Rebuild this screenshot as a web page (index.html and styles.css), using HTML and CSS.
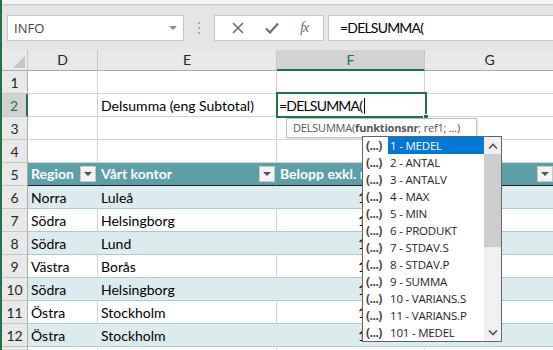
FILE: index.html
```html
<!DOCTYPE html>
<html>
<head>
    <meta charset="utf-8">
    <link rel="stylesheet" href="styles.css">
</head>
<body>
    <div class="edge"></div>
    <div class="app">
        <div class="ribbon_edge"></div>
        <div class="fbar">
            <div class="namebox">
                <span>INFO</span>
                <svg width="8" height="5" viewBox="0 0 8 5"><path d="M0 0h8L4 4z" fill="#8a8a8a"/></svg>
            </div>
            <div class="grip"><i></i><i></i><i></i></div>
            <div class="fbtns">
                <svg width="12" height="12" viewBox="0 0 12 12"><path d="M1 1l10 10M11 1L1 11" stroke="#6e6e6e" stroke-width="1.6"/></svg>
                <svg width="14" height="12" viewBox="0 0 14 12"><path d="M1 6.5l4 4L13 1.5" stroke="#6e6e6e" stroke-width="2.2" fill="none"/></svg>
                <span class="fx">fx</span>
            </div>
            <div class="finput">=DELSUMMA(</div>
        </div>

        <div class="sheet">
            <div class="corner"><svg width="12" height="12" viewBox="0 0 12 12"><path d="M12 0v12H0z" fill="#c4c4c4"/></svg></div>
            <div class="colhead">D</div>
            <div class="colhead">E</div>
            <div class="colhead active">F</div>
            <div class="colhead">G</div>

            <div class="rowhead">1</div>
            <div class="cell"></div><div class="cell"></div><div class="cell"></div><div class="cell"></div>

            <div class="rowhead active">2</div>
            <div class="cell"></div><div class="cell">Delsumma (eng Subtotal)</div><div class="cell"></div><div class="cell"></div>

            <div class="rowhead">3</div>
            <div class="cell"></div><div class="cell"></div><div class="cell"></div><div class="cell"></div>

            <div class="rowhead">4</div>
            <div class="cell"></div><div class="cell"></div><div class="cell"></div><div class="cell"></div>

            <div class="rowhead">5</div>
            <div class="cell th"><span>Region</span><b class="filter"></b></div>
            <div class="cell th"><span>Vårt kontor</span><b class="filter"></b></div>
            <div class="cell th"><span>Belopp exkl. m</span><b class="filter"></b></div>
            <div class="cell th"><span></span><b class="filter"></b></div>

            <div class="rowhead">6</div>
            <div class="cell band">Norra</div><div class="cell band">Luleå</div><div class="cell band num">1</div><div class="cell band"></div>
            <div class="rowhead">7</div>
            <div class="cell plain">Södra</div><div class="cell plain">Helsingborg</div><div class="cell plain num">1</div><div class="cell plain"></div>
            <div class="rowhead">8</div>
            <div class="cell band">Södra</div><div class="cell band">Lund</div><div class="cell band num">1</div><div class="cell band"></div>
            <div class="rowhead">9</div>
            <div class="cell plain">Västra</div><div class="cell plain">Borås</div><div class="cell plain num">1</div><div class="cell plain"></div>
            <div class="rowhead">10</div>
            <div class="cell band">Södra</div><div class="cell band">Helsingborg</div><div class="cell band num">1</div><div class="cell band"></div>
            <div class="rowhead">11</div>
            <div class="cell plain">Östra</div><div class="cell plain">Stockholm</div><div class="cell plain num">1</div><div class="cell plain"></div>
            <div class="rowhead">12</div>
            <div class="cell band">Östra</div><div class="cell band">Stockholm</div><div class="cell band num">1</div><div class="cell band"></div>
            <div class="rowhead"></div>
            <div class="cell"></div><div class="cell"></div><div class="cell"></div><div class="cell"></div>
        </div>

        <!-- cell in edit mode -->
        <div class="editor">=DELSUMMA(<span class="caret"></span><b class="handle"></b></div>

        <div class="tip">DELSUMMA(<b>funktionsnr</b>; ref1; ...)</div>

        <div class="dropdown">
            <ul class="items">
                <li class="selected"><span class="ic">(...)</span><span class="txt">1 - MEDEL</span></li>
                <li><span class="ic">(...)</span><span class="txt">2 - ANTAL</span></li>
                <li><span class="ic">(...)</span><span class="txt">3 - ANTALV</span></li>
                <li><span class="ic">(...)</span><span class="txt">4 - MAX</span></li>
                <li><span class="ic">(...)</span><span class="txt">5 - MIN</span></li>
                <li><span class="ic">(...)</span><span class="txt">6 - PRODUKT</span></li>
                <li><span class="ic">(...)</span><span class="txt">7 - STDAV.S</span></li>
                <li><span class="ic">(...)</span><span class="txt">8 - STDAV.P</span></li>
                <li><span class="ic">(...)</span><span class="txt">9 - SUMMA</span></li>
                <li><span class="ic">(...)</span><span class="txt">10 - VARIANS.S</span></li>
                <li><span class="ic">(...)</span><span class="txt">11 - VARIANS.P</span></li>
                <li><span class="ic">(...)</span><span class="txt">101 - MEDEL</span></li>
            </ul>
            <div class="scroll">
                <div class="arrow"><svg width="10" height="6" viewBox="0 0 10 6"><path d="M1 5.5L5 1.5l4 4" stroke="#555" stroke-width="1.6" fill="none"/></svg></div>
                <div class="thumb"></div>
                <div class="track"></div>
                <div class="arrow"><svg width="10" height="6" viewBox="0 0 10 6"><path d="M1 .5l4 4 4-4" stroke="#555" stroke-width="1.6" fill="none"/></svg></div>
            </div>
        </div>
    </div>
</body>
</html>
```

FILE: styles.css
```css
* {
    box-sizing: border-box;
}
body {
    margin: 0;
    width: 553px;
    height: 350px;
    overflow: hidden;
    display: flex;
    background-color: #fff;
    font-family: Lato, "Liberation Sans", sans-serif;
}
.edge {
    width: 2px;
    flex: none;
    background-color: #217346;
}
.app {
    position: relative;
    flex: 1;
    overflow: hidden;
}

/* formula bar */
.ribbon_edge {
    height: 4px;
    background-color: #f5f5f5;
    box-shadow: 0 1px 2px rgba(0, 0, 0, 0.18);
    position: relative;
}
.fbar {
    height: 46px;
    background-color: #e6e6e6;
    display: flex;
    align-items: flex-start;
    padding: 11px 0 0 5px;
}
.namebox {
    width: 177px;
    height: 26px;
    background-color: #fff;
    border: 1px solid #c6c6c6;
    display: flex;
    align-items: center;
    justify-content: space-between;
    padding: 0 6px 0 6px;
    font: 13px "Open Sans", sans-serif;
    color: #444;
}
.grip {
    width: 30px;
    height: 26px;
    display: flex;
    flex-direction: column;
    align-items: center;
    justify-content: center;
    gap: 3px;
}
.grip i {
    width: 2px;
    height: 2px;
    background-color: #a8a8a8;
}
.fbtns {
    width: 110px;
    height: 26px;
    background-color: #fff;
    border: 1px solid #c6c6c6;
    display: flex;
    align-items: center;
    justify-content: space-around;
    padding: 0 4px 0 6px;
}
.fx {
    font: italic 14px "Liberation Serif", serif;
    color: #6e6e6e;
    letter-spacing: -1px;
}
.finput {
    flex: 1;
    margin-left: 4px;
    height: 26px;
    background-color: #fff;
    border: 1px solid #c6c6c6;
    border-right: none;
    padding: 3px 0 0 11px;
    font-size: 14px;
    letter-spacing: -0.8px;
    color: #000;
}

/* grid */
.sheet {
    display: grid;
    grid-template-columns: 26px 70px 179px 148px 130px;
    grid-template-rows: 21px;
    grid-auto-rows: 23px;
    font-size: 14px;
}
.corner {
    background-color: #e9e9e9;
    border-right: 1px solid #c6c6c6;
    border-bottom: 1px solid #ababab;
    display: flex;
    align-items: flex-end;
    justify-content: flex-end;
    padding: 0 2px 2px 0;
}
.colhead {
    background-color: #e9e9e9;
    border-right: 1px solid #c6c6c6;
    border-bottom: 1px solid #ababab;
    text-align: center;
    line-height: 20px;
    color: #262626;
}
.colhead.active {
    background-color: #d2d2d2;
    color: #217346;
    border-bottom: 2px solid #217346;
}
.rowhead {
    background-color: #e9e9e9;
    border-right: 1px solid #ababab;
    border-bottom: 1px solid #c6c6c6;
    text-align: center;
    line-height: 24px;
    color: #262626;
}
.rowhead.active {
    background-color: #d2d2d2;
    color: #217346;
    border-right: 2px solid #217346;
}
.cell {
    border-right: 1px solid #d4d4d4;
    border-bottom: 1px solid #d4d4d4;
    padding: 0 3px 0 3px;
    line-height: 24px;
    white-space: nowrap;
    color: #000;
}
.th {
    background-color: #5b9fa9;
    border-right-color: #5b9fa9;
    border-bottom: 1px solid #1f1f1f;
    color: #fff;
    font-weight: bold;
    display: flex;
    align-items: center;
    gap: 4px;
    padding-right: 1px;
}
.th span {
    flex: 1;
    overflow: hidden;
}
.filter {
    width: 16px;
    height: 16px;
    flex: none;
    background-color: #f4f4f4;
    border: 1px solid #c8c8c8;
    display: flex;
    align-items: center;
    justify-content: center;
}
.filter::after {
    content: "";
    border-left: 4px solid transparent;
    border-right: 4px solid transparent;
    border-top: 4px solid #555;
}
.band {
    background-color: #dcebee;
    border-right-color: #dcebee;
    border-bottom-color: #a3cdd3;
}
.plain {
    border-bottom-color: #a3cdd3;
}
.num {
    padding-left: 81px;
}

/* editing overlays */
.editor {
    position: absolute;
    left: 274px;
    top: 92px;
    width: 151px;
    height: 26px;
    border: 2px solid #217346;
    background-color: #fff;
    padding-left: 1px;
    font-size: 14px;
    letter-spacing: -0.8px;
    line-height: 23px;
    white-space: nowrap;
}
.caret {
    display: inline-block;
    width: 1px;
    height: 16px;
    background-color: #000;
    vertical-align: -3px;
    margin-left: 2px;
}
.handle {
    position: absolute;
    right: -4px;
    bottom: -4px;
    width: 6px;
    height: 6px;
    background-color: #217346;
    border: 1px solid #fff;
}
.tip {
    position: absolute;
    left: 284px;
    top: 118px;
    width: 191px;
    height: 20px;
    background-color: #fff;
    border: 1px solid #bdbdbd;
    box-shadow: 1px 1px 2px rgba(0, 0, 0, 0.12);
    padding-left: 6px;
    font: 11px/18px "Open Sans", sans-serif;
    letter-spacing: -0.2px;
    color: #555;
    white-space: nowrap;
}
.dropdown {
    position: absolute;
    left: 360px;
    top: 136px;
    width: 140px;
    height: 206px;
    background-color: #fff;
    border: 1px solid #646464;
    display: flex;
}
.items {
    list-style: none;
    margin: 0;
    padding: 0;
    flex: 1;
    font: 11.5px "Open Sans", sans-serif;
    letter-spacing: -0.2px;
    color: #1e1e1e;
}
.items li {
    height: 17px;
    display: flex;
    align-items: center;
    padding-left: 3px;
}
.ic {
    width: 22px;
    font-size: 12px;
    font-weight: bold;
    color: #444;
    letter-spacing: -0.5px;
}
.txt {
    flex: 1;
    height: 17px;
    line-height: 17px;
    padding-left: 2px;
}
.selected .txt {
    background-color: #0078d7;
    color: #fff;
}
.scroll {
    width: 17px;
    background-color: #f0f0f0;
    display: flex;
    flex-direction: column;
}
.arrow {
    height: 17px;
    display: flex;
    align-items: center;
    justify-content: center;
}
.thumb {
    height: 93px;
    background-color: #cdcdcd;
}
.track {
    flex: 1;
}
```
